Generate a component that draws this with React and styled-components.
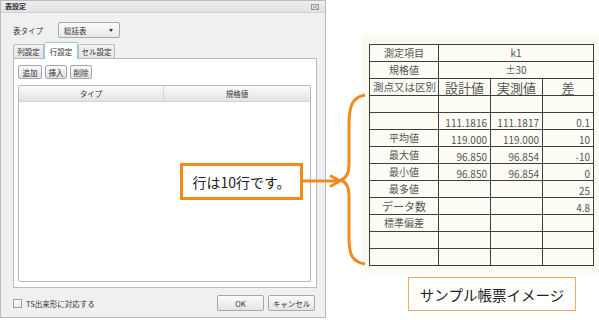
import React from "react";
import styled, { createGlobalStyle } from "styled-components";

const Global = createGlobalStyle`
  html, body { margin: 0; padding: 0; background: #ffffff; }
  body { width: 599px; height: 320px; overflow: hidden; font-family: "Noto Sans CJK JP", "Noto Sans", sans-serif; }
  * { box-sizing: border-box; }
`;

const Page = styled.div`
  position: relative;
  display: flex;
  width: 599px;
  height: 320px;
`;

const Dialog = styled.div`
  width: 326px;
  height: 318px;
  border: 1px solid #b4bcc6;
  background: #f0f0f0;
  display: flex;
  flex-direction: column;
  font-size: 7.5px;
  color: #333;
`;

const TitleBar = styled.div`
  height: 12px;
  flex: none;
  display: flex;
  align-items: center;
  justify-content: space-between;
  padding: 0 6px 0 4px;
  background: linear-gradient(#eeeeee, #e2e2e2);
  border-bottom: 1px solid #d2d2d2;
`;

const Title = styled.span`
  font-size: 7px;
  font-weight: bold;
  color: #333;
  line-height: 1;
`;

const Body = styled.div`
  flex: 1;
  display: flex;
  flex-direction: column;
  padding: 9px 9px 0 11px;
`;

const TypeRow = styled.div`
  display: flex;
  align-items: center;
  height: 16px;
`;

const Label = styled.span`
  width: 46px;
  padding-left: 1px;
  color: #333;
`;

const Select = styled.div`
  width: 62px;
  height: 16px;
  display: flex;
  align-items: center;
  justify-content: space-between;
  padding: 0 6px 0 5px;
  border: 1px solid #a8a8a8;
  border-radius: 2px;
  background: linear-gradient(#fbfbfb, #e9e9e9);
`;

const Caret = styled.span`
  width: 0;
  height: 0;
  border-left: 2.5px solid transparent;
  border-right: 2.5px solid transparent;
  border-top: 3px solid #333;
`;

const TabStrip = styled.div`
  display: flex;
  align-items: flex-end;
  height: 16px;
  margin-top: 4px;
  padding-left: 1px;
`;

const Tab = styled.div`
  height: ${(p) => (p.$active ? 17 : 14)}px;
  width: ${(p) => p.$w}px;
  display: flex;
  align-items: center;
  justify-content: center;
  border: 1px solid ${(p) => (p.$active ? "#9fc4dc" : "#b6bcc4")};
  border-bottom: none;
  border-radius: 2px 2px 0 0;
  background: ${(p) => (p.$active ? "#ffffff" : "linear-gradient(#f2f2f2, #e4e4e4)")};
  margin-bottom: ${(p) => (p.$active ? -1 : 0)}px;
  position: relative;
  z-index: ${(p) => (p.$active ? 2 : 1)};
  color: #333;
`;

const Panel = styled.div`
  height: 230px;
  margin-left: 1px;
  width: 304px;
  border: 1px solid #b6bcc4;
  background: #ffffff;
  padding: 6px 5px 5px 4px;
  display: flex;
  flex-direction: column;
`;

const ToolRow = styled.div`
  display: flex;
  gap: 3px;
  height: 14px;
`;

const SmallButton = styled.div`
  width: ${(p) => p.$w}px;
  height: 14px;
  display: flex;
  align-items: center;
  justify-content: center;
  border: 1px solid #a4a8ae;
  border-radius: 2px;
  background: linear-gradient(#fafafa, #e2e2e2);
  color: #333;
`;

const Grid = styled.div`
  margin-top: 6px;
  flex: 1;
  border: 1px solid #b0b8c0;
  border-radius: 2px;
  display: flex;
  flex-direction: column;
`;

const GridHeader = styled.div`
  height: 16px;
  display: grid;
  grid-template-columns: 145px 1fr;
  background: linear-gradient(#fbfbfb, #e3e3e3);
  border-bottom: 1px solid #cfd3d8;
`;

const HeaderCell = styled.div`
  display: flex;
  align-items: center;
  justify-content: center;
  border-right: ${(p) => (p.$last ? "none" : "1px solid #d2d6da")};
  color: #333;
`;

const Footer = styled.div`
  height: 30px;
  display: flex;
  align-items: center;
  justify-content: space-between;
  padding: 0 1px 0 1px;
`;

const CheckWrap = styled.label`
  display: flex;
  align-items: center;
  gap: 4px;
  color: #333;
`;

const CheckBox = styled.span`
  width: 9px;
  height: 9px;
  border: 1px solid #a0a0a0;
  background: linear-gradient(#fdfdfd, #ececec);
`;

const Buttons = styled.div`
  display: flex;
  gap: 4px;
`;

const DialogButton = styled.div`
  width: ${(p) => p.$w}px;
  height: 16px;
  display: flex;
  align-items: center;
  justify-content: center;
  border: 1px solid #a4a8ae;
  border-radius: 2px;
  background: linear-gradient(#fbfbfb, #e4e4e4);
  color: #333;
`;

const RightArea = styled.div`
  display: flex;
  flex-direction: column;
  margin-left: 36px;
  padding-top: 35px;
`;

const CreamPanel = styled.div`
  width: 237px;
  height: 238px;
  background: #fafaf1;
  padding: 9px 0 0 7px;
`;

const SheetTable = styled.table`
  border-collapse: collapse;
  table-layout: fixed;
  width: 224px;
  background: #fcfcf4;
  color: #555;
  font-family: "Noto Sans CJK JP", sans-serif;
`;

const Td = styled.td`
  border: 1px solid #3e3e3e;
  height: 17px;
  padding: 0 3px;
  line-height: 1;
  white-space: nowrap;
  overflow: hidden;
  font-size: ${(p) => p.$size || 10}px;
  text-align: ${(p) => p.$align || "center"};
  vertical-align: ${(p) => (p.$align === "right" ? "bottom" : "middle")};
  padding-bottom: ${(p) => (p.$align === "right" ? 1 : 0)}px;
  color: #555;
`;

const CaptionBox = styled.div`
  margin: 4px 0 0 46px;
  width: 168px;
  height: 34px;
  border: 1px solid #f6a65a;
  display: flex;
  align-items: center;
  justify-content: center;
  font-size: 14.5px;
  color: #222;
  background: #ffffff;
`;

const Callout = styled.div`
  position: absolute;
  left: 180px;
  top: 163px;
  width: 123px;
  height: 37px;
  border: 3px solid #f28a1e;
  background: #ffffff;
  display: flex;
  align-items: center;
  justify-content: center;
  font-size: 14px;
  color: #222;
  z-index: 5;
`;

const Overlay = styled.svg`
  position: absolute;
  left: 0;
  top: 0;
  pointer-events: none;
  z-index: 4;
`;

const rows = [
  [{ t: "測定項目" }, { t: "k1", span: 3 }],
  [{ t: "規格値" }, { t: "±30", span: 3 }],
  [{ t: "測点又は区別", size: 10.5 }, { t: "設計値", size: 13 }, { t: "実測値", size: 13 }, { t: "差", size: 13 }],
  [{ t: "" }, { t: "" }, { t: "" }, { t: "" }],
  [{ t: "" }, { t: "111.1816", a: "right" }, { t: "111.1817", a: "right" }, { t: "0.1", a: "right" }],
  [{ t: "平均値" }, { t: "119.000", a: "right" }, { t: "119.000", a: "right" }, { t: "10", a: "right" }],
  [{ t: "最大値" }, { t: "96.850", a: "right" }, { t: "96.854", a: "right" }, { t: "-10", a: "right" }],
  [{ t: "最小値" }, { t: "96.850", a: "right" }, { t: "96.854", a: "right" }, { t: "0", a: "right" }],
  [{ t: "最多値" }, { t: "" }, { t: "" }, { t: "25", a: "right" }],
  [{ t: "データ数", size: 11 }, { t: "" }, { t: "" }, { t: "4.8", a: "right" }],
  [{ t: "標準偏差" }, { t: "" }, { t: "" }, { t: "" }],
  [{ t: "" }, { t: "" }, { t: "" }, { t: "" }],
  [{ t: "" }, { t: "" }, { t: "" }, { t: "" }],
];

export default function App() {
  return (
    <>
      <Global />
      <Page>
        <Dialog>
          <TitleBar>
            <Title>表設定</Title>
            <svg width="8" height="6" viewBox="0 0 8 6">
              <rect x="0.5" y="0.5" width="7" height="5" fill="none" stroke="#9a9a9a" strokeWidth="1" />
              <path d="M1.5 1.5 L6.5 4.5 M6.5 1.5 L1.5 4.5" stroke="#9a9a9a" strokeWidth="0.8" />
            </svg>
          </TitleBar>
          <Body>
            <TypeRow>
              <Label>表タイプ</Label>
              <Select>
                <span>総括表</span>
                <Caret />
              </Select>
            </TypeRow>
            <TabStrip>
              <Tab $w={31}>列設定</Tab>
              <Tab $w={34} $active>行設定</Tab>
              <Tab $w={37}>セル設定</Tab>
            </TabStrip>
            <Panel>
              <ToolRow>
                <SmallButton $w={24}>追加</SmallButton>
                <SmallButton $w={22}>挿入</SmallButton>
                <SmallButton $w={22}>削除</SmallButton>
              </ToolRow>
              <Grid>
                <GridHeader>
                  <HeaderCell>タイプ</HeaderCell>
                  <HeaderCell $last>規格値</HeaderCell>
                </GridHeader>
              </Grid>
            </Panel>
            <Footer>
              <CheckWrap>
                <CheckBox />
                <span>TS出来形に対応する</span>
              </CheckWrap>
              <Buttons>
                <DialogButton $w={47}>OK</DialogButton>
                <DialogButton $w={47}>キャンセル</DialogButton>
              </Buttons>
            </Footer>
          </Body>
        </Dialog>
        <RightArea>
          <CreamPanel>
            <SheetTable>
              <colgroup>
                <col style={{ width: 69 }} />
                <col style={{ width: 52 }} />
                <col style={{ width: 52 }} />
                <col style={{ width: 51 }} />
              </colgroup>
              <tbody>
                {rows.map((r, i) => (
                  <tr key={i}>
                    {r.map((c, j) => (
                      <Td key={j} colSpan={c.span || 1} $align={c.a} $size={c.size}>
                        {c.t}
                      </Td>
                    ))}
                  </tr>
                ))}
              </tbody>
            </SheetTable>
          </CreamPanel>
          <CaptionBox>サンプル帳票イメージ</CaptionBox>
        </RightArea>
        <Callout>行は10行です。</Callout>
        <Overlay width="599" height="320" viewBox="0 0 599 320">
          <path d="M302 181 L338 181" stroke="#f28a1e" strokeWidth="3" fill="none" />
          <path d="M330 175.5 L340 181 L330 186.5" stroke="#f28a1e" strokeWidth="3" fill="none" strokeLinejoin="miter" />
          <path
            d="M365 95 C353 97 349 105 349 124 L349 165 C349 174 346 178 341 180 C346 182 349 186 349 195 L349 238 C349 256 353 262 365 264"
            stroke="#f28a1e"
            strokeWidth="3"
            fill="none"
          />
        </Overlay>
      </Page>
    </>
  );
}
